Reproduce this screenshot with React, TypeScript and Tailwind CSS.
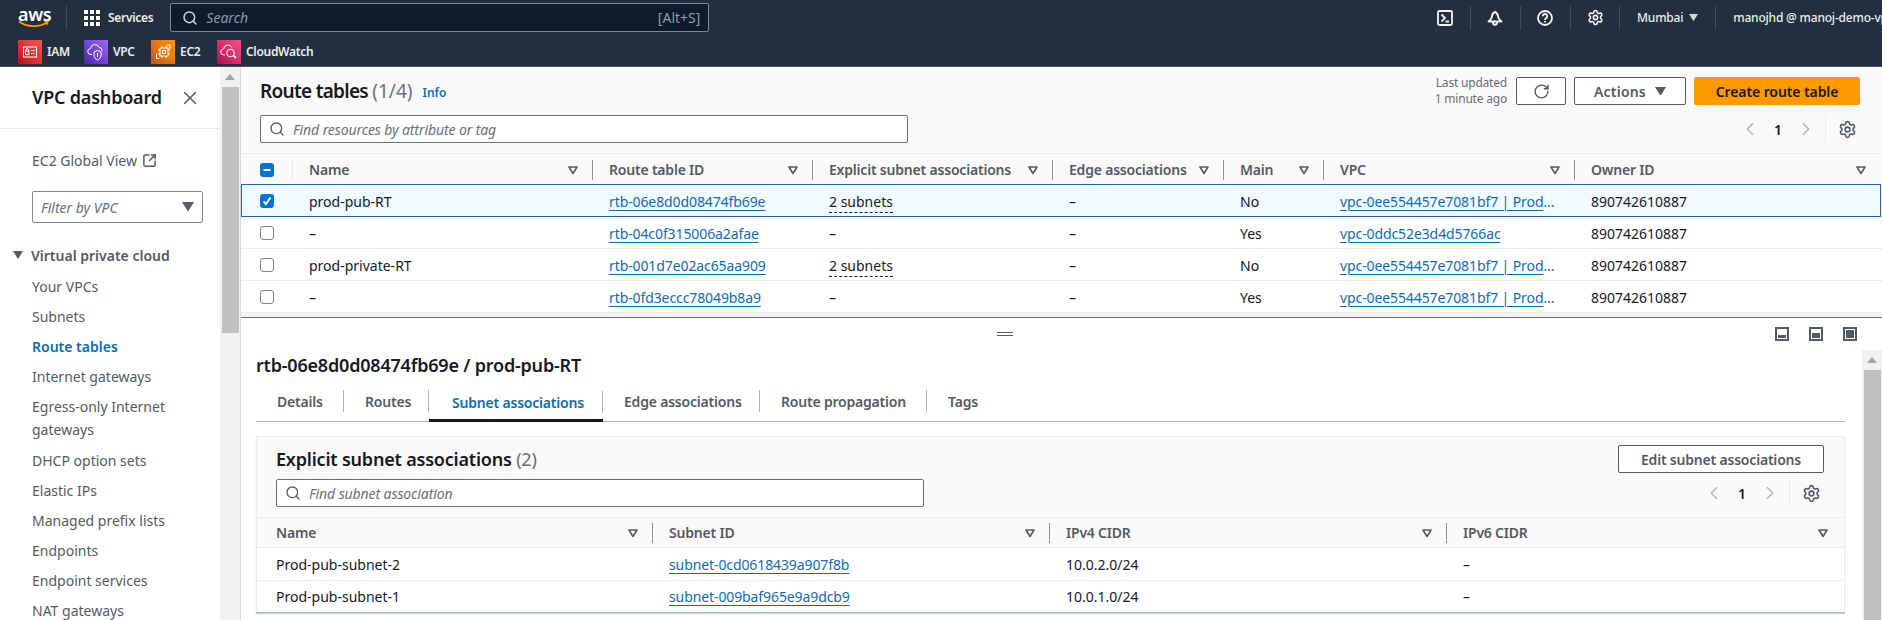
import React from "react";
import { Search, Settings, RotateCw, X, ChevronLeft, ChevronRight, SquareArrowOutUpRight } from "lucide-react";

const Caret = ({ className = "" }: { className?: string }) => (
  <svg width="10" height="10" viewBox="0 0 10 10" className={"shrink-0 " + className}>
    <path d="M1 2h8L5 8.5z" fill="none" stroke="#545b64" strokeWidth="1.6" strokeLinejoin="round" />
  </svg>
);

const Solid = ({ w = 10, color = "#545b64", className = "" }: { w?: number; color?: string; className?: string }) => (
  <svg width={w} height={w * 0.8} viewBox="0 0 10 8" className={"shrink-0 " + className}>
    <path d="M0 0h10L5 8z" fill={color} />
  </svg>
);

const Sep = () => <span className="w-px h-[20px] shrink-0 ml-[14px] bg-[#879596]" />;

const HeadCell = ({ label, last = false, pl = "pl-4" }: { label: string; last?: boolean; pl?: string }) => (
  <div className={"flex items-center h-full " + pl + (last ? " pr-[16px]" : "")}>
    <span className="flex-1 font-semibold text-[#545b64] whitespace-nowrap tracking-[-0.2px]">{label}</span>
    <Caret />
    {!last && <Sep />}
  </div>
);

const Lnk = ({ children }: { children: React.ReactNode }) => (
  <a className="text-[#0f6cb0] underline underline-offset-[3px] decoration-1 whitespace-nowrap tracking-[-0.1px]">{children}</a>
);

const Box = ({ checked = false, dash = false }: { checked?: boolean; dash?: boolean }) =>
  checked || dash ? (
    <span className="w-[14px] h-[14px] rounded-[3px] bg-[#0972d3] flex items-center justify-center">
      <svg width="10" height="10" viewBox="0 0 10 10">
        {dash ? (
          <path d="M1.5 5h7" stroke="#fff" strokeWidth="2" />
        ) : (
          <path d="M1.5 5.5l2.5 2.5L8.5 1.5" stroke="#fff" strokeWidth="1.8" fill="none" />
        )}
      </svg>
    </span>
  ) : (
    <span className="w-[14px] h-[14px] rounded-[3px] border border-[#7d8998] bg-white" />
  );

const gridTop = "grid grid-cols-[52px_300px_220px_240px_171px_100px_251px_1fr]";
const gridBottom = "grid grid-cols-[396px_397px_397px_1fr]";

const rows = [
  { name: "prod-pub-RT", id: "rtb-06e8d0d08474fb69e", sub: "2 subnets", main: "No", vpc: "vpc-0ee554457e7081bf7 | Prod", more: true },
  { name: "–", id: "rtb-04c0f315006a2afae", sub: "–", main: "Yes", vpc: "vpc-0ddc52e3d4d5766ac", more: false },
  { name: "prod-private-RT", id: "rtb-001d7e02ac65aa909", sub: "2 subnets", main: "No", vpc: "vpc-0ee554457e7081bf7 | Prod", more: true },
  { name: "–", id: "rtb-0fd3eccc78049b8a9", sub: "–", main: "Yes", vpc: "vpc-0ee554457e7081bf7 | Prod", more: true },
];

const nav: [string, boolean?][] = [
  ["Your VPCs"],
  ["Subnets"],
  ["Route tables", true],
  ["Internet gateways"],
];
const nav2 = ["DHCP option sets", "Elastic IPs", "Managed prefix lists", "Endpoints", "Endpoint services", "NAT gateways"];

const Divider = ({ className = "" }: { className?: string }) => <span className={"w-px h-[24px] shrink-0 bg-[#414d5c] " + className} />;

const Pager = ({ className }: { className: string }) => (
  <div className={"flex items-center text-[#16191f] " + className}>
    <ChevronLeft size={22} strokeWidth={1.5} className="text-[#aab7b8]" />
    <span className="w-[34px] text-center font-semibold text-[14px]">1</span>
    <ChevronRight size={22} strokeWidth={1.5} className="text-[#aab7b8]" />
    <span className="w-px h-[28px] bg-[#e9ebed] ml-[8px]" />
    <Settings size={19} strokeWidth={2} className="ml-[12px] text-[#545b64]" />
  </div>
);

const ServiceIcon = ({ bg, children }: { bg: string; children: React.ReactNode }) => (
  <span className={"w-[24px] h-[24px] shrink-0 flex items-center justify-center " + bg}>
    <svg width="20" height="20" viewBox="0 0 20 20" fill="none" stroke="#fff" strokeWidth="1">{children}</svg>
  </span>
);

const Service = ({ bg, label, icon, cls }: { bg: string; label: string; icon: React.ReactNode; cls: string }) => (
  <div className={"flex items-center " + cls}>
    <ServiceIcon bg={bg}>{icon}</ServiceIcon>
    <span className="ml-[5px] font-semibold text-[12px] text-[#eaeded] tracking-[-0.3px]">{label}</span>
  </div>
);

const SplitIcon = ({ fill }: { fill: string }) => (
  <span className="w-[14px] h-[14px] border-2 border-[#545b64] bg-white p-px flex flex-col justify-end">
    <span className={"bg-[#545b64] w-full " + fill} />
  </span>
);

const tabs: [string, number, boolean][] = [
  ["Details", 88, false],
  ["Routes", 85, false],
  ["Subnet associations", 174, true],
  ["Edge associations", 157, false],
  ["Route propagation", 167, false],
  ["Tags", 80, false],
];

export default function App() {
  return (
    <div className="w-[1882px] h-[620px] overflow-hidden flex flex-col bg-white text-[14px] text-[#16191f] font-['Noto_Sans',sans-serif]">
      {/* Top navigation */}
      <header className="h-[67px] shrink-0 bg-[#232f3e] border-b border-[#414d5c]">
        <div className="h-[35px] flex items-center">
          <div className="relative w-[66px] h-full pl-[18px]">
            <span className="block text-white font-semibold text-[18px] leading-[18px] mt-[5px] tracking-[-0.3px]">aws</span>
            <svg width="32" height="9" viewBox="0 0 32 9" className="absolute left-[18px] top-[20px]">
              <path d="M1 1.500c8 6 20 6 28 1" stroke="#ff9900" strokeWidth="1.800" fill="none" />
              <path d="M26 1l5-.5-1.500 5z" fill="#ff9900" />
            </svg>
          </div>
          <Divider />
          <div className="ml-[17px] grid grid-cols-3 gap-[2px] w-[16px]">
            {Array.from({ length: 9 }).map((_, i) => (
              <span key={i} className="w-[4px] h-[4px] bg-white" />
            ))}
          </div>
          <span className="ml-[8px] font-semibold text-[12px] text-[#eaeded] tracking-[-0.3px]">Services</span>
          <div className="ml-[17px] w-[539px] h-[29px] rounded-[2px] border border-[#7d8998] bg-[#0f1b2a] flex items-center pl-[11px] pr-[8px]">
            <Search size={16} strokeWidth={2.2} className="text-[#d1d5db]" />
            <span className="ml-[8px] italic text-[#8d99a8] text-[14px]">Search</span>
            <span className="ml-auto text-[#8d99a8] text-[14px]">[Alt+S]</span>
          </div>
          <div className="ml-auto flex items-center w-[445px] overflow-hidden whitespace-nowrap">
            <svg width="16" height="16" viewBox="0 0 16 16" fill="none" stroke="#f2f3f3" strokeWidth="1.800" className="shrink-0">
              <rect x="1" y="1" width="14" height="14" rx="1.500" />
              <path d="M4.500 4.500L8 8l-3.500 3.500M8.500 11.500h3.500" />
            </svg>
            <Divider className="ml-[17px]" />
            <svg width="16" height="16" viewBox="0 0 16 16" fill="none" stroke="#f2f3f3" strokeWidth="1.900" strokeLinejoin="round" className="shrink-0 ml-[16px]">
              <path d="M8 1.800c-2 1-3 2.800-3.200 5.200-.1 1.500-1.800 3.200-3.300 4.500h13c-1.500-1.300-3.200-3-3.300-4.500C11 4.600 10 2.800 8 1.800z" />
              <path d="M6 12v.8a2 2 0 004 0V12" />
            </svg>
            <Divider className="ml-[17px]" />
            <svg width="16" height="16" viewBox="0 0 16 16" fill="none" stroke="#f2f3f3" strokeWidth="1.800" className="shrink-0 ml-[16px]">
              <circle cx="8" cy="8" r="7" />
              <path d="M5.800 6.300a2.200 2.200 0 114 1.200C9 8.500 8 8.600 8 10" />
              <path d="M8 11v1.500" />
            </svg>
            <Divider className="ml-[17px]" />
            <Settings size={17} strokeWidth={2.2} className="shrink-0 ml-[16px] text-[#f2f3f3]" />
            <Divider className="ml-[15px]" />
            <span className="ml-[17px] text-[12px] font-medium text-[#eaeded] tracking-[-0.2px]">Mumbai</span>
            <Solid w={9} color="#d1d5db" className="ml-[6px]" />
            <Divider className="ml-[17px]" />
            <span className="ml-[17px] text-[12px] font-medium text-[#eaeded] tracking-[-0.2px]">manojhd @ manoj-demo-vpc-account</span>
          </div>
        </div>
        <div className="h-[31px] flex items-center pl-[18px] pt-[3px]">
          <Service
            cls="w-[66px]"
            bg="bg-linear-to-tr from-[#bd0816] to-[#ff5252]"
            label="IAM"
            icon={<>
              <rect x="3.500" y="5" width="13" height="10" />
              <rect x="5.500" y="9" width="3.400" height="3.600" />
              <path d="M6 9V7.600a1.200 1.200 0 012.400 0V9M11 8.500h3.500M11 11.500h3.500" />
            </>}
          />
          <Service
            cls="w-[67px]"
            bg="bg-linear-to-tr from-[#4d27a8] to-[#a166ff]"
            label="VPC"
            icon={<>
              <path d="M6 12.500H5a3 3 0 01-.5-6 4.500 4.500 0 018.600-1.200A3.400 3.400 0 0116 9" />
              <path d="M11.500 8.500l3.500 1.500v3c0 2.500-1.500 4-3.500 5-2-1-3.500-2.500-3.500-5v-3z" />
              <path d="M11.500 11v4" />
            </>}
          />
          <Service
            cls="w-[66px]"
            bg="bg-linear-to-tr from-[#c8511b] to-[#ff9900]"
            label="EC2"
            icon={<>
              <rect x="7" y="6" width="8" height="8" />
              <rect x="9.500" y="8.500" width="3" height="3" />
              <path d="M9 6V4M13 6V4M9 16v-2M13 16v-2M7 8H5M7 12H5M17 8h-2M17 12h-2" />
              <path d="M6 16.500H3.500v-5M14 3h3v4" />
            </>}
          />
          <Service
            cls=""
            bg="bg-linear-to-tr from-[#b0084d] to-[#ff4f8b]"
            label="CloudWatch"
            icon={<>
              <path d="M6 13H5a3 3 0 01-.5-6 4.500 4.500 0 018.500-1.500" />
              <circle cx="11.500" cy="11" r="3.800" />
              <path d="M14.500 13.500L17 16" strokeWidth="1.600" />
            </>}
          />
        </div>
      </header>

      <div className="flex-1 min-h-0 flex">
        {/* Side navigation */}
        <aside className="w-[220px] shrink-0 overflow-hidden">
          <div className="h-[62px] pl-[32px] pr-[19px] flex items-center justify-between border-b border-[#e9ebed]">
            <span className="text-[18px] font-semibold tracking-[-0.2px]">VPC dashboard</span>
            <X size={22} strokeWidth={1.6} className="text-[#545b64]" />
          </div>
          <div className="pl-[32px] text-[#545b64]">
            <div className="mt-[20px] h-[22px] flex items-center">
              EC2 Global View
              <SquareArrowOutUpRight size={15} strokeWidth={2.4} className="ml-[5px]" />
            </div>
            <div className="mt-[20px] w-[171px] h-[32px] rounded-[2px] border border-[#7d8998] flex items-center justify-between pl-[8px] pr-[8px] italic text-[#687078]">
              Filter by VPC
              <Solid w={12} />
            </div>
          </div>
          <div className="mt-[21px] pl-[13px] h-[22px] flex items-center font-semibold text-[#545b64]">
            <Solid w={10} />
            <span className="ml-[8px]">Virtual private cloud</span>
          </div>
          <nav className="mt-[5px] pl-[32px] text-[#545b64] flex flex-col">
            {nav.map(([t, active]) => (
              <a key={t} className={"h-[30px] flex items-center " + (active ? "font-semibold text-[#0f6cb0]" : "")}>{t}</a>
            ))}
            <a className="leading-[23px] py-[4px]">Egress-only Internet<br />gateways</a>
            {nav2.map((t) => (
              <a key={t} className="h-[30px] flex items-center">{t}</a>
            ))}
          </nav>
        </aside>

        {/* Sidebar scrollbar */}
        <div className="w-[20px] shrink-0 bg-[#f1f1f1] flex flex-col items-center">
          <span className="h-[20px] flex items-center"><span className="w-0 h-0 border-x-[5px] border-x-transparent border-b-[6px] border-b-[#a3a3a3]" /></span>
          <span className="w-[17px] h-[246px] bg-[#c1c1c1]" />
        </div>

        {/* Main */}
        <main className="flex-1 min-w-0 flex flex-col border-l border-[#d5dbdb]">
          <section className="h-[251px] shrink-0 bg-[#fafafa] border-b border-[#687078] flex flex-col">
            <div className="pl-[19px] pr-[22px] pt-[10px] pb-[10px] border-b border-[#e9ebed]">
              <div className="h-[28px] flex items-center">
                <h1 className="text-[19px] font-semibold tracking-[-0.7px]">Route tables <span className="font-normal text-[#687078] tracking-normal">(1/4)</span></h1>
                <a className="ml-[10px] mt-[3px] text-[12px] font-semibold text-[#0f6cb0]">Info</a>
                <div className="ml-auto text-[12px] leading-[16px] text-[#687078] text-right mr-[9px] tracking-[-0.2px]">Last updated<br />1 minute ago</div>
                <button className="w-[50px] h-[28px] rounded-[2px] border border-[#545b64] bg-white flex items-center justify-center">
                  <RotateCw size={17} strokeWidth={2} className="text-[#545b64]" />
                </button>
                <button className="ml-[8px] w-[112px] h-[28px] rounded-[2px] border border-[#545b64] bg-white flex items-center justify-center font-semibold text-[#545b64] tracking-[0.2px]">
                  Actions<Solid w={11} className="ml-[9px]" />
                </button>
                <button className="ml-[8px] w-[166px] h-[28px] rounded-[2px] bg-[#ff9900] font-semibold text-[#16191f] tracking-[-0.1px]">Create route table</button>
              </div>
              <div className="mt-[10px] h-[28px] flex items-center">
                <div className="w-[648px] h-[28px] rounded-[2px] border border-[#687078] bg-white flex items-center pl-[8px]">
                  <Search size={16} strokeWidth={2} className="text-[#545b64]" />
                  <span className="ml-[8px] italic text-[#687078] tracking-[-0.1px]">Find resources by attribute or tag</span>
                </div>
                <Pager className="ml-auto pr-[3px]" />
              </div>
            </div>

            <div className={gridTop + " h-[31px] shrink-0"}>
              <div className="flex items-center pl-[19px]">
                <Box dash />
                <span className="ml-auto w-px h-[20px] bg-[#e9ebed]" />
              </div>
              <HeadCell label="Name" />
              <HeadCell label="Route table ID" />
              <HeadCell label="Explicit subnet associations" />
              <HeadCell label="Edge associations" />
              <HeadCell label="Main" />
              <HeadCell label="VPC" />
              <HeadCell label="Owner ID" last />
            </div>

            <div className="shrink-0">
              {rows.map((r, i) => (
                <div
                  key={i}
                  className={
                    gridTop +
                    " items-center border-b pt-px " +
                    (i === 0
                      ? "h-[33px] -mt-px mr-px bg-[#f1faff] border-t border-[#0f6cb0] shadow-[inset_1px_0_0_#0f6cb0,inset_-1px_0_0_#0f6cb0]"
                      : "h-[32px] bg-white border-[#e9ebed]")
                  }
                >
                  <div className="flex items-center pl-[19px]"><Box checked={i === 0} /></div>
                  <div className="pl-4">{r.name}</div>
                  <div className="pl-4"><Lnk>{r.id}</Lnk></div>
                  <div className="pl-4">
                    {r.sub === "–" ? "–" : <span className="border-b border-dashed border-[#16191f] pb-[1px]">{r.sub}</span>}
                  </div>
                  <div className="pl-4">–</div>
                  <div className="pl-4">{r.main}</div>
                  <div className="pl-4 whitespace-nowrap text-[#0f6cb0]"><Lnk>{r.vpc}</Lnk>{r.more && <span className="tracking-[-0.1px]">...</span>}</div>
                  <div className="pl-4">890742610887</div>
                </div>
              ))}
            </div>
            <div className="flex-1 bg-[#f2f3f3]" />
          </section>

          {/* Split panel */}
          <section className="flex-1 min-h-0 flex flex-col">
            <div className="h-[32px] shrink-0 flex items-center bg-white">
              <div className="ml-[756px] w-[16px] h-[4px] border-y border-[#545b64]" />
              <div className="ml-auto flex items-center gap-[20px] pr-[25px]">
                <SplitIcon fill="h-[3px]" />
                <SplitIcon fill="h-[5px]" />
                <SplitIcon fill="h-[8px]" />
              </div>
            </div>
            <div className="flex-1 min-h-0 flex">
              <div className="flex-1 min-w-0 pl-[15px] pr-[17px]">
                <h2 className="h-[30px] flex items-center text-[18px] font-semibold tracking-[-0.2px]">rtb-06e8d0d08474fb69e / prod-pub-RT</h2>
                <div className="h-[42px] flex items-end border-b border-[#aab7b8]">
                  {tabs.map(([t, w, active], i) => (
                    <div
                      key={t}
                      style={{ width: w }}
                      className={
                        "h-[42px] pt-[12px] relative font-semibold tracking-[-0.2px] " +
                        (active ? "pl-[23px] text-[#0f6cb0] border-b-[3px] border-[#16191f] -mb-px" : "pl-[21px] text-[#545b64]")
                      }
                    >
                      <span className="block leading-[22px] h-[22px] whitespace-nowrap">{t}</span>
                      {i < 5 && <span className="absolute right-0 top-[11px] w-px h-[22px] bg-[#aab7b8]" />}
                    </div>
                  ))}
                </div>

                <div className="mt-[14px] h-[177px] border border-[#eaeded] border-b-[#aab7b8] bg-[#fafafa] shadow-[0_1px_1px_rgba(0,28,36,0.2)] flex flex-col">
                  <div className="h-[80px] shrink-0 flex justify-between pl-[19px] pr-[20px] pt-[8px]">
                    <div>
                      <div className="h-[28px] flex items-center text-[18px] font-semibold tracking-[-0.2px]">
                        Explicit subnet associations&nbsp;<span className="font-normal text-[#687078]">(2)</span>
                      </div>
                      <div className="mt-[6px] w-[648px] h-[28px] rounded-[2px] border border-[#687078] bg-white flex items-center pl-[8px]">
                        <Search size={16} strokeWidth={2} className="text-[#545b64]" />
                        <span className="ml-[8px] italic text-[#687078] tracking-[-0.1px]">Find subnet association</span>
                      </div>
                    </div>
                    <div className="flex flex-col items-end">
                      <button className="w-[206px] h-[28px] rounded-[2px] border border-[#545b64] bg-white font-semibold text-[#545b64] tracking-[-0.2px]">Edit subnet associations</button>
                      <Pager className="mt-[6px] h-[28px] pr-[3px]" />
                    </div>
                  </div>
                  <div className={gridBottom + " h-[31px] shrink-0 border-y border-[#e9ebed]"}>
                    <HeadCell label="Name" pl="pl-[19px]" />
                    <HeadCell label="Subnet ID" />
                    <HeadCell label="IPv4 CIDR" />
                    <HeadCell label="IPv6 CIDR" last />
                  </div>
                  {[
                    ["Prod-pub-subnet-2", "subnet-0cd0618439a907f8b", "10.0.2.0/24"],
                    ["Prod-pub-subnet-1", "subnet-009baf965e9a9dcb9", "10.0.1.0/24"],
                  ].map((r, i) => (
                    <div key={i} className={gridBottom + " h-[32px] pt-px flex-1 items-center bg-white " + (i === 0 ? "border-b border-[#e9ebed]" : "")}>
                      <div className="pl-[19px]">{r[0]}</div>
                      <div className="pl-4"><Lnk>{r[1]}</Lnk></div>
                      <div className="pl-4">{r[2]}</div>
                      <div className="pl-4">–</div>
                    </div>
                  ))}
                </div>
              </div>
              <div className="w-[20px] shrink-0 bg-[#f1f1f1] flex flex-col items-center">
                <span className="h-[20px] flex items-center"><span className="w-0 h-0 border-x-[5px] border-x-transparent border-b-[6px] border-b-[#a3a3a3]" /></span>
                <span className="w-[17px] flex-1 bg-[#c1c1c1]" />
              </div>
            </div>
          </section>
        </main>
      </div>
    </div>
  );
}
